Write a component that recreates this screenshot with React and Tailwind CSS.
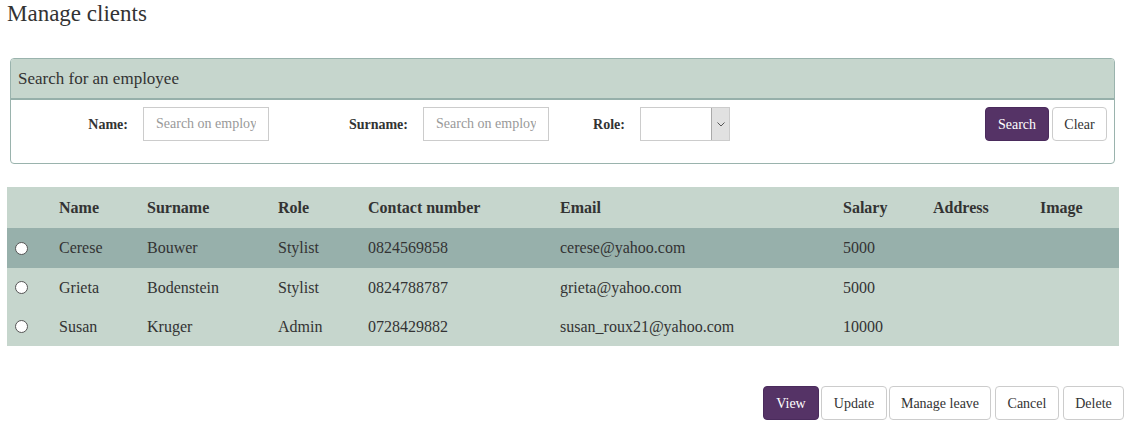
import React from 'react'

const employees = [
  { name: 'Cerese', surname: 'Bouwer', role: 'Stylist', contact: '0824569858', email: 'cerese@yahoo.com', salary: '5000', selected: true },
  { name: 'Grieta', surname: 'Bodenstein', role: 'Stylist', contact: '0824788787', email: 'grieta@yahoo.com', salary: '5000' },
  { name: 'Susan', surname: 'Kruger', role: 'Admin', contact: '0728429882', email: 'susan_roux21@yahoo.com', salary: '10000' },
]

function Btn({ children, primary, className = '' }) {
  return (
    <button
      className={
        (primary
          ? 'h-[34px] rounded-[4px] border border-[#4a2b5c] bg-[#553366] text-white text-[14px] '
          : 'h-[34px] rounded-[4px] border border-[#cccccc] bg-white text-[#333] text-[14px] ') + className
      }
    >
      {children}
    </button>
  )
}

export default function App() {
  return (
    <div className="w-[1145px] h-[435px] bg-white text-[#333] font-['Liberation_Serif','Times_New_Roman',serif]">
      <h3 className="pl-[7px] text-[23px] leading-[28px] font-normal">Manage clients</h3>

      {/* Search panel */}
      <div className="mt-[30px] ml-[10px] w-[1105px] border border-[#9ab3ad] rounded-[4px] overflow-hidden">
        <div className="h-[41px] bg-[#c6d6cd] border-b-2 border-[#96b0aa] pl-[7px] pt-[1px] flex items-center text-[17px]">
          Search for an employee
        </div>
        <div className="h-[63px] pt-[7px] flex items-start text-[14px]">
          <label className="w-[117px] h-[34px] flex items-center justify-end font-bold">Name:</label>
          <input
            placeholder="Search on employee name"
            className="ml-[15px] w-[126px] h-[34px] border border-[#cccccc] px-3 text-[14px] placeholder:text-[#999] outline-none"
          />
          <label className="w-[139px] h-[34px] flex items-center justify-end font-bold">Surname:</label>
          <input
            placeholder="Search on employee surname"
            className="ml-[15px] w-[126px] h-[34px] border border-[#cccccc] px-3 text-[14px] placeholder:text-[#999] outline-none"
          />
          <label className="w-[76px] h-[34px] flex items-center justify-end font-bold">Role:</label>
          <div className="ml-[15px] w-[90px] h-[34px] border border-[#cccccc] flex justify-end">
            <div className="w-[18px] h-full bg-[#e1e1e1] border-l border-[#aaaaaa] flex items-center justify-center">
              <svg width="8" height="5" viewBox="0 0 8 5" fill="none" stroke="#555" strokeWidth="1">
                <path d="M0.5 0.5 L4 4 L7.5 0.5" />
              </svg>
            </div>
          </div>
          <div className="flex-1" />
          <div className="flex gap-[3px] pr-[7px]">
            <Btn primary className="w-[64px]">Search</Btn>
            <Btn className="w-[55px]">Clear</Btn>
          </div>
        </div>
      </div>

      {/* Employees table */}
      <table className="mt-[23px] ml-[7px] w-[1112px] table-fixed border-collapse text-[16px]">
        <colgroup>
          <col className="w-[44px]" />
          <col className="w-[88px]" />
          <col className="w-[131px]" />
          <col className="w-[90px]" />
          <col className="w-[192px]" />
          <col className="w-[283px]" />
          <col className="w-[90px]" />
          <col className="w-[107px]" />
          <col className="w-[87px]" />
        </colgroup>
        <thead>
          <tr className="h-[41px] bg-[#c6d6cd] text-left">
            <th></th>
            <th className="px-2 font-bold">Name</th>
            <th className="px-2 font-bold">Surname</th>
            <th className="px-2 font-bold">Role</th>
            <th className="px-2 font-bold">Contact number</th>
            <th className="px-2 font-bold">Email</th>
            <th className="px-2 font-bold">Salary</th>
            <th className="px-2 font-bold">Address</th>
            <th className="px-2 font-bold">Image</th>
          </tr>
        </thead>
        <tbody>
          {employees.map((e, i) => (
            <tr key={e.name} className={(i === 0 ? 'h-[40px] ' : 'h-[39px] ') + (e.selected ? 'bg-[#97b0ab]' : 'bg-[#c6d6cd]')}>
              <td className="pl-[8px]">
                <span className="block w-[13px] h-[13px] rounded-full border border-[#555] bg-white" />
              </td>
              <td className="px-2">{e.name}</td>
              <td className="px-2">{e.surname}</td>
              <td className="px-2">{e.role}</td>
              <td className="px-2">{e.contact}</td>
              <td className="px-2">{e.email}</td>
              <td className="px-2">{e.salary}</td>
              <td className="px-2"></td>
              <td className="px-2"></td>
            </tr>
          ))}
        </tbody>
      </table>

      {/* Actions */}
      <div className="mt-[40px] pr-[21px] flex justify-end">
        <Btn primary className="w-[56px]">View</Btn>
        <Btn className="w-[66px] ml-[2px]">Update</Btn>
        <Btn className="w-[102px] ml-[2px]">Manage leave</Btn>
        <Btn className="w-[64px] ml-[4px]">Cancel</Btn>
        <Btn className="w-[61px] ml-[4px]">Delete</Btn>
      </div>
    </div>
  )
}
